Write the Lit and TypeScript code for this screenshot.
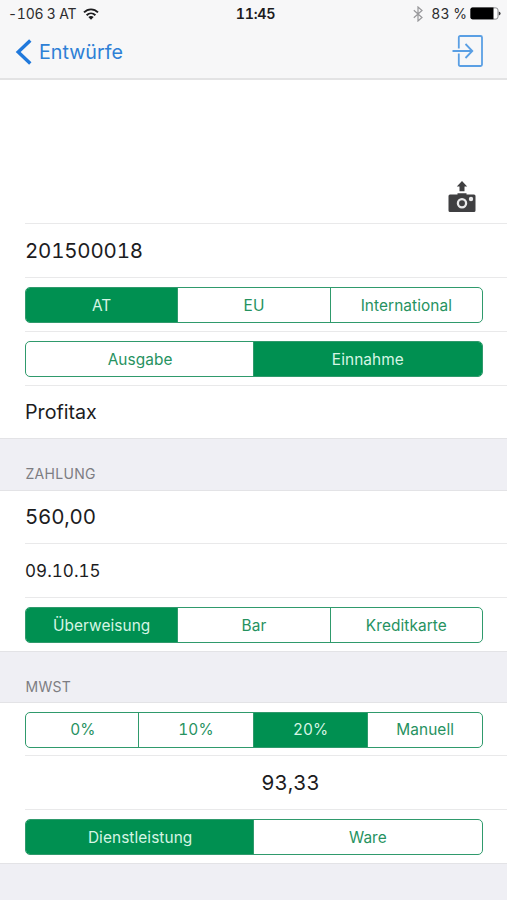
import { LitElement, html, css, svg } from "lit";
import { customElement, property } from "lit/decorators.js";
import { classMap } from "lit/directives/class-map.js";

@customElement("segmented-control")
class SegmentedControl extends LitElement {
  @property({ type: Array }) options: string[] = [];
  @property({ type: Number }) selected = 0;

  static styles = css`
    :host {
      display: block;
      width: 458px;
      height: 36px;
      font-variant-numeric: tabular-nums;
    }
    .track {
      display: flex;
      box-sizing: border-box;
      height: 100%;
      border: 1px solid #2f9a6c;
      border-radius: 5px;
      overflow: hidden;
      background: #fff;
    }
    .segment {
      flex: 1 1 0;
      display: flex;
      align-items: center;
      justify-content: center;
      font-size: 15.4px;
      letter-spacing: 0.08px;
      color: #26925f;
    }
    .segment + .segment {
      border-left: 1px solid #2f9a6c;
    }
    .even .segment:first-child {
      margin-right: -1.5px;
    }
    .segment.on {
      background: #009051;
      color: #d6f5e4;
    }
  `;

  render() {
    return html`<div class=${classMap({ track: true, even: this.options.length % 2 === 0 })}>
      ${this.options.map(
        (label, i) =>
          html`<div class=${classMap({ segment: true, on: i === this.selected })}>${label}</div>`
      )}
    </div>`;
  }
}

@customElement("app-root")
class AppRoot extends LitElement {
  static styles = css`
    :host {
      display: flex;
      flex-direction: column;
      width: 507px;
      height: 900px;
      overflow: hidden;
      background: #efeff4;
      font-family: Inter, "Liberation Sans", sans-serif;
      font-variant-numeric: tabular-nums;
      color: #1c1c1e;
    }
    header {
      box-sizing: border-box;
      height: 80px;
      background: #f7f7f8;
      border-bottom: 2px solid #e3e3e4;
    }
    .status {
      display: grid;
      grid-template-columns: 1fr auto 1fr;
      align-items: center;
      height: 27px;
      padding: 0 6px 0 8px;
      font-size: 14px;
      color: #2c2c2e;
    }
    .carrier,
    .power {
      display: flex;
      align-items: center;
    }
    .carrier {
      gap: 7px;
      letter-spacing: -0.25px;
    }
    .power {
      justify-content: flex-end;
    }
    .bluetooth {
      margin-right: 8px;
    }
    .battery {
      margin-left: 3px;
    }
    .clock {
      font-weight: 600;
      font-size: 14.3px;
      letter-spacing: -0.3px;
      padding-left: 2px;
      color: #1c1c1e;
    }
    .nav {
      display: flex;
      align-items: center;
      justify-content: space-between;
      height: 50px;
      padding: 0 23px 0 15px;
    }
    .back {
      display: flex;
      align-items: center;
      gap: 7px;
      font-size: 19.7px;
      color: #2e80d6;
    }
    .enter {
      margin-bottom: 2px;
    }
    svg {
      display: block;
      flex: none;
    }
    .group {
      background: #fff;
    }
    .row {
      display: flex;
      align-items: center;
      box-sizing: border-box;
      height: 54px;
      margin-left: 25px;
      border-bottom: 1px solid #e9e9ea;
      font-size: 20.5px;
    }
    .row.photo {
      height: 144px;
      align-items: flex-end;
      justify-content: flex-end;
      padding: 0 31px 10.5px 0;
    }
    .row.number {
      letter-spacing: -0.2px;
    }
    .row.control {
      padding-top: 1px;
    }
    .row.last {
      border-bottom: none;
    }
    .row.name {
      height: 52px;
      font-size: 19.7px;
    }
    .row.amount {
      padding-bottom: 2px;
    }
    .row.date {
      font-size: 17px;
      letter-spacing: 0.05px;
    }
    .row.tax {
      justify-content: center;
      padding-left: 49px;
    }
    .row.short {
      height: 53px;
    }
    .section {
      box-sizing: border-box;
      height: 52px;
      padding: 26px 0 0 25.5px;
      border-top: 1px solid #e3e3e6;
      border-bottom: 1px solid #e3e3e6;
      font-size: 14px;
      line-height: 18px;
      letter-spacing: 0.3px;
      color: #7d7d82;
    }
    .section.tall {
      height: 53px;
    }
    .footer {
      flex: 1;
      border-top: 1px solid #e3e3e6;
    }
  `;

  private wifi = svg`<svg width="16" height="12" viewBox="0 0 16 12" fill="none" stroke="#1c1c1e" stroke-width="1.9">
    <path d="M1 4.4C5 .3 11 .3 15 4.4"/>
    <path d="M3.6 7.2C6.2 4.7 9.8 4.7 12.4 7.2"/>
    <path d="M8 11.8L5.3 9.1Q8 6.9 10.7 9.1Z" fill="#1c1c1e" stroke="none"/>
  </svg>`;

  private bluetooth = svg`<svg class="bluetooth" width="10" height="16" viewBox="0 0 10 16" fill="none" stroke="#97979a" stroke-width="1.2">
    <path d="M.8 4.3L9 11.5L5 15V1L9 4.5L.8 11.7"/>
  </svg>`;

  private battery = svg`<svg class="battery" width="31" height="13" viewBox="0 0 31 13">
    <rect x=".7" y=".9" width="27.3" height="11.2" rx="2.2" fill="#fff" stroke="#8a8a8c"/>
    <path d="M2.200 .6H23.500V12.200H2.200Q.5 12.200 .5 10.500V2.300Q.5 .6 2.200 .6Z" fill="#000"/>
    <path d="M28.800 4.500Q30.600 5 30.600 6.500T28.800 8.500Z" fill="#3a3a3c"/>
  </svg>`;

  private chevron = svg`<svg width="17" height="26" viewBox="0 0 17 26" fill="none" stroke="#2079dc" stroke-width="3.4">
    <path d="M15.3 1.5L3.2 13L15.3 24.5"/>
  </svg>`;

  private enter = svg`<svg class="enter" width="32" height="32" viewBox="0 0 32 32" fill="none" stroke="#5a9fe4" stroke-width="1.8">
    <path d="M6.8 13.5V2.5Q6.800 1 8.300 1H28.500Q30 1 30 2.500V29.500Q30 31 28.500 31H8.300Q6.800 31 6.800 29.500V18.500"/>
    <path d="M.5 16H20.500M13.500 9L20.300 16L13.500 23"/>
  </svg>`;

  private camera = svg`<svg width="28" height="33" viewBox="0 0 28 33">
    <path d="M14 1L19.200 6.500H16.500V11.300H11.500V6.500H8.800Z" fill="#3f3f41"/>
    <path d="M2 14.500H9.500V13.300H18.500V14.500H26Q27.500 14.500 27.500 16V30.500Q27.500 32 26 32H2Q.5 32 .5 30.500V16Q.5 14.500 2 14.500Z" fill="#3f3f41"/>
    <circle cx="14" cy="23.2" r="4.1" fill="none" stroke="#e9e9ea" stroke-width="2.3"/>
    <circle cx="23" cy="19" r="2.2" fill="#e9e9ea"/>
  </svg>`;

  render() {
    return html`
      <header>
        <div class="status">
          <div class="carrier"><span>-106 3 AT</span>${this.wifi}</div>
          <div class="clock">11:45</div>
          <div class="power">${this.bluetooth}<span>83 %</span>${this.battery}</div>
        </div>
        <div class="nav">
          <div class="back">${this.chevron}<span>Entwürfe</span></div>
          ${this.enter}
        </div>
      </header>
      <div class="group">
        <div class="row photo">${this.camera}</div>
        <div class="row number">201500018</div>
        <div class="row control">
          <segmented-control .options=${["AT", "EU", "International"]} .selected=${0}></segmented-control>
        </div>
        <div class="row control">
          <segmented-control .options=${["Ausgabe", "Einnahme"]} .selected=${1}></segmented-control>
        </div>
        <div class="row last name">Profitax</div>
      </div>
      <div class="section tall">ZAHLUNG</div>
      <div class="group">
        <div class="row number short amount">560,00</div>
        <div class="row date">09.10.15</div>
        <div class="row control last short">
          <segmented-control .options=${["Überweisung", "Bar", "Kreditkarte"]} .selected=${0}></segmented-control>
        </div>
      </div>
      <div class="section">MWST</div>
      <div class="group">
        <div class="row control short">
          <segmented-control .options=${["0%", "10%", "20%", "Manuell"]} .selected=${2}></segmented-control>
        </div>
        <div class="row tax">93,33</div>
        <div class="row control last short">
          <segmented-control .options=${["Dienstleistung", "Ware"]} .selected=${0}></segmented-control>
        </div>
      </div>
      <div class="footer"></div>
    `;
  }
}
